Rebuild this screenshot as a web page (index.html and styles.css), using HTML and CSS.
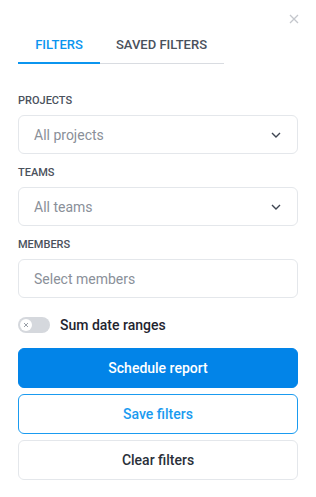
FILE: index.html
```html
<!DOCTYPE html>
<html>
<head>
<meta charset="utf-8">
<link rel="stylesheet" href="styles.css">
</head>
<body>
<div class="panel">
  <div class="top">
    <button class="close" aria-label="Close">
      <svg width="10" height="10" viewBox="0 0 10 10"><path d="M1 1L9 9M9 1L1 9" stroke="#c4c7cc" stroke-width="1.3" fill="none"/></svg>
    </button>
  </div>
  <div class="tabs">
    <div class="tab active">FILTERS</div>
    <div class="tab">SAVED FILTERS</div>
  </div>
  <div class="fields">
    <div class="field">
      <div class="label">PROJECTS</div>
      <div class="select">
        <span class="placeholder">All projects</span>
        <svg class="chev" width="10" height="6" viewBox="0 0 10 6"><path d="M1 1L5 5L9 1" stroke="#3f4652" stroke-width="1.4" fill="none"/></svg>
      </div>
    </div>
    <div class="field">
      <div class="label">TEAMS</div>
      <div class="select">
        <span class="placeholder">All teams</span>
        <svg class="chev" width="10" height="6" viewBox="0 0 10 6"><path d="M1 1L5 5L9 1" stroke="#3f4652" stroke-width="1.4" fill="none"/></svg>
      </div>
    </div>
    <div class="field">
      <div class="label">MEMBERS</div>
      <div class="select">
        <span class="placeholder">Select members</span>
      </div>
    </div>
  </div>
  <div class="toggle-row">
    <div class="toggle">
      <div class="knob">
        <svg width="6" height="6" viewBox="0 0 6 6"><path d="M1 1L5 5M5 1L1 5" stroke="#9aa0a8" stroke-width="1" fill="none"/></svg>
      </div>
    </div>
    <span class="toggle-label">Sum date ranges</span>
  </div>
  <div class="buttons">
    <button class="btn primary">Schedule report</button>
    <button class="btn outline">Save filters</button>
    <button class="btn plain">Clear filters</button>
  </div>
</div>
</body>
</html>
```

FILE: styles.css
```css
* { box-sizing: border-box; }
html, body { margin: 0; padding: 0; background: #fff; }
body { font-family: Roboto, "Noto Sans", Arial, sans-serif; color: #1f2530; }
.panel { width: 316px; padding: 0 18px 0 18px; }
.top { height: 34px; display: flex; justify-content: flex-end; align-items: flex-end; }
.close { border: 0; background: none; padding: 0; width: 10px; height: 10px; margin-right: -1px; margin-bottom: 10px; display: flex; }
.tabs { display: flex; width: 206px; border-bottom: 1px solid #d9dce1; height: 30px; }
.tab { font-size: 13px; font-weight: 500; color: #4a515c; line-height: 22px; padding: 0 17px; text-align: center; }
.tab.active { width: 82px; color: #0b95ef; border-bottom: 2px solid #0b95ef; margin-bottom: -1px; }
.tab:not(.active) { padding-left: 16px; }
.fields { margin-top: 30px; display: flex; flex-direction: column; gap: 12px; }
.field { display: flex; flex-direction: column; }
.label { font-size: 11px; font-weight: 500; color: #4a515c; line-height: 13px; margin-bottom: 8px; }
.select { height: 39px; border: 1px solid #e4e7eb; border-radius: 6px; display: flex; align-items: center; justify-content: space-between; padding: 0 16px 0 15px; }
.placeholder { font-size: 14px; color: #8a9099; }
.chev { display: block; }
.toggle-row { display: flex; align-items: center; gap: 10px; margin-top: 19px; height: 16px; }
.toggle { width: 32px; height: 16px; border-radius: 8px; background: #d5d8dd; padding: 2px; display: flex; }
.knob { width: 12px; height: 12px; border-radius: 50%; background: #fff; display: flex; align-items: center; justify-content: center; }
.knob svg { display: block; }
.toggle-label { font-size: 14px; font-weight: 500; color: #1f2530; }
.buttons { margin-top: 15px; display: flex; flex-direction: column; gap: 6px; }
.btn { height: 40px; width: 100%; border-radius: 6px; font-family: inherit; font-size: 14px; font-weight: 500; cursor: pointer; }
.btn.primary { background: #0284e8; border: 1px solid #0284e8; color: #fff; }
.btn.outline { background: #fff; border: 1px solid #1a9bf0; color: #1a9bf0; }
.btn.plain { background: #fff; border: 1px solid #e4e7eb; color: #2a303a; }
```
